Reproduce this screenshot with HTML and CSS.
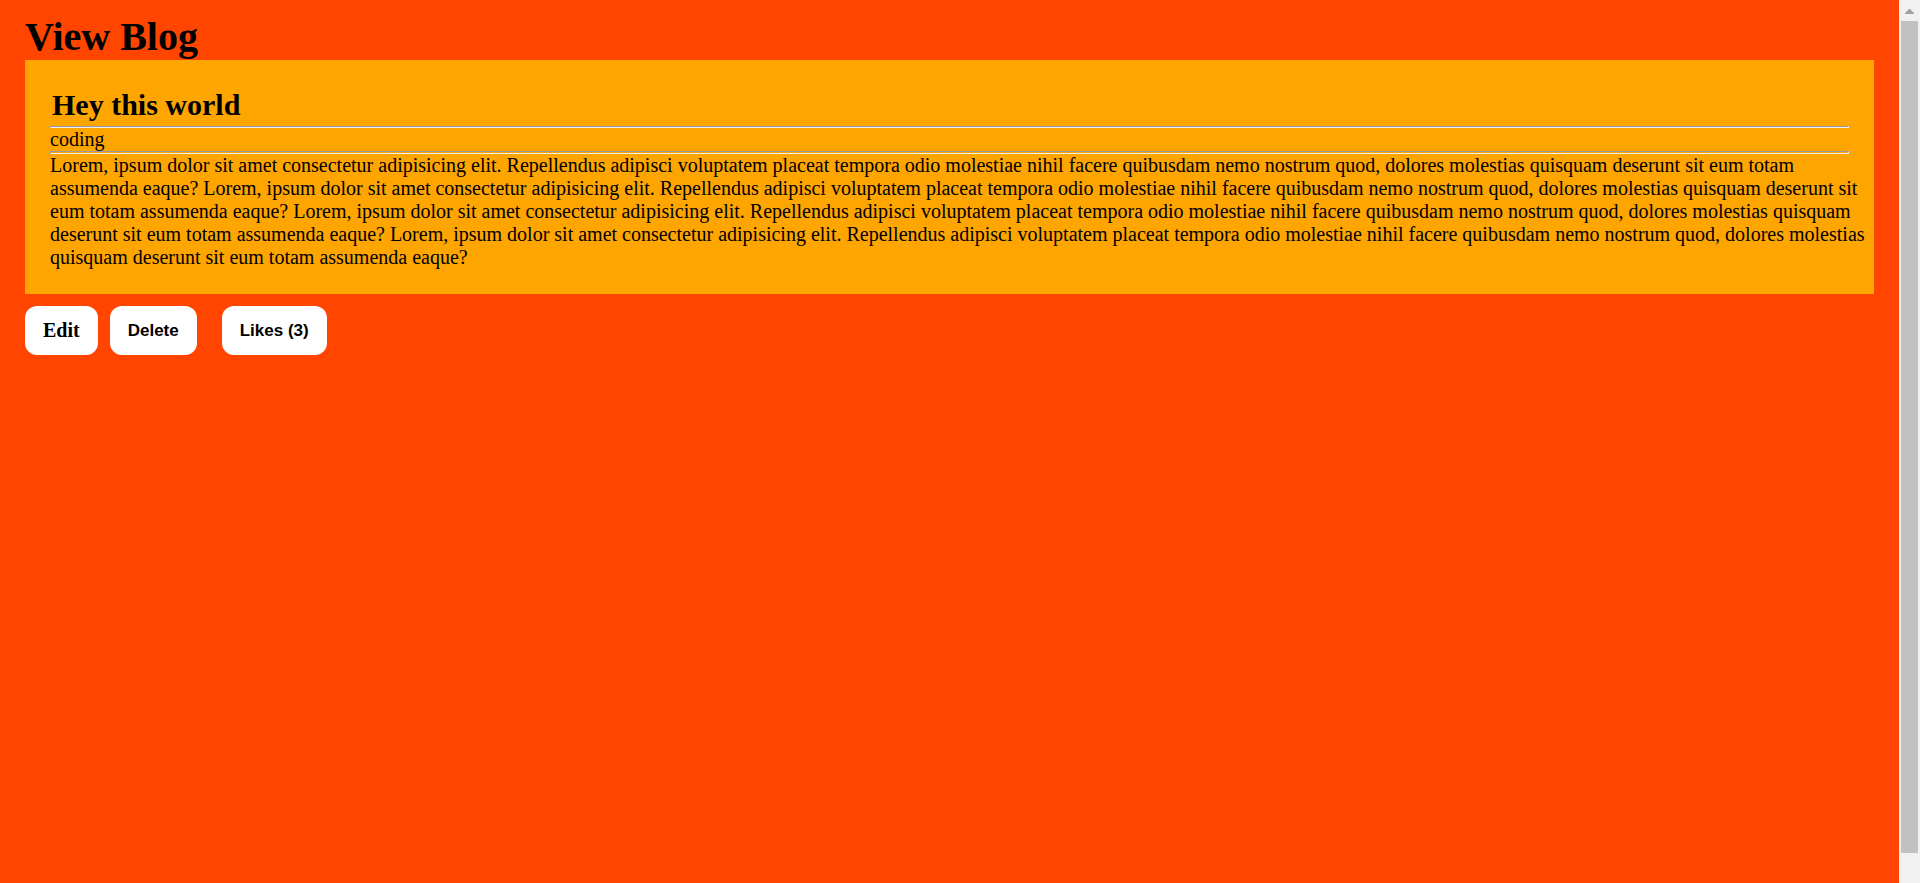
FILE: index.html
```html
<!DOCTYPE html>
<html lang="en">
<head>
<meta charset="utf-8">
<title>View Blog</title>
<link rel="stylesheet" href="styles.css">
</head>
<body>
<main class="page">
  <h1 class="page-title">View Blog</h1>
  <article class="post">
    <h2 class="post-title">Hey this world</h2>
    <hr class="rule">
    <p class="post-text">coding</p>
    <hr class="rule rule-tall">
    <p class="post-text">Lorem, ipsum dolor sit amet consectetur adipisicing elit. Repellendus adipisci voluptatem placeat tempora odio molestiae nihil facere quibusdam nemo nostrum quod, dolores molestias quisquam deserunt sit eum totam assumenda eaque? Lorem, ipsum dolor sit amet consectetur adipisicing elit. Repellendus adipisci voluptatem placeat tempora odio molestiae nihil facere quibusdam nemo nostrum quod, dolores molestias quisquam deserunt sit eum totam assumenda eaque? Lorem, ipsum dolor sit amet consectetur adipisicing elit. Repellendus adipisci voluptatem placeat tempora odio molestiae nihil facere quibusdam nemo nostrum quod, dolores molestias quisquam deserunt sit eum totam assumenda eaque? Lorem, ipsum dolor sit amet consectetur adipisicing elit. Repellendus adipisci voluptatem placeat tempora odio molestiae nihil facere quibusdam nemo nostrum quod, dolores molestias quisquam deserunt sit eum totam assumenda eaque?</p>
  </article>
  <div class="actions">
    <div class="action-group">
      <a class="button button-link" href="#edit">Edit</a>
      <button class="button" type="button">Delete</button>
    </div>
    <button class="button" type="button">Likes (3)</button>
  </div>
</main>
<div class="scrollbar" aria-hidden="true">
  <svg class="scroll-arrow" viewBox="0 0 9 5" width="9" height="5"><path d="M4 0h1l4 4v1H0V4z" fill="#a3a3a3"/></svg>
  <div class="scroll-thumb"></div>
</div>
</body>
</html>
```

FILE: styles.css
```css
* {
  box-sizing: border-box;
  margin: 0;
  padding: 0;
}

body {
  display: flex;
  min-height: 100vh;
  background: orangered;
  color: #000;
  font-family: "Liberation Serif", "Times New Roman", serif;
  font-size: 20px;
  line-height: 23px;
}

.page {
  flex: 1;
  min-width: 0;
  padding: 14px 25px;
}

.page-title {
  font-size: 40px;
  line-height: 46px;
}

.post {
  padding: 25px 5px 25px 25px;
  background: orange;
}

.post-title {
  padding: 3px 2px 4px;
  font-size: 30px;
  line-height: 34px;
}

.rule {
  height: 2px;
  margin-right: 20px;
  border: 1px solid;
  border-color: #9a9a9a #eee #eee #9a9a9a;
}

.rule-tall {
  height: 3px;
}

.actions {
  display: flex;
  gap: 25px;
  margin-top: 12px;
}

.action-group {
  display: flex;
  gap: 12px;
}

.button {
  padding: 13px 18px;
  border: 0;
  border-radius: 12px;
  background: #fff;
  color: #000;
  font: bold 17px/23px "Liberation Sans", Arial, sans-serif;
  cursor: pointer;
}

.button-link {
  font-family: "Liberation Serif", "Times New Roman", serif;
  font-size: 20px;
  text-decoration: none;
}

.scrollbar {
  display: flex;
  flex-direction: column;
  align-items: center;
  gap: 7px;
  width: 21px;
  padding: 9px 2px 30px;
  background: #f1f1f1;
}

.scroll-arrow {
  display: block;
}

.scroll-thumb {
  flex: 1;
  align-self: stretch;
  background: #c1c1c1;
}
```
